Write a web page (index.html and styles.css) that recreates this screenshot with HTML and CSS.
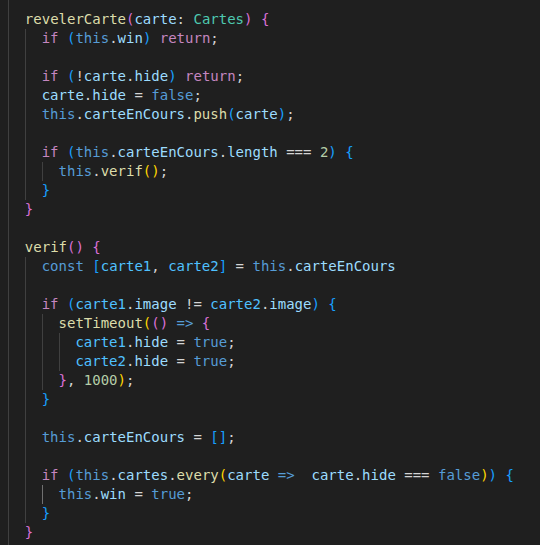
FILE: index.html
```html
<!DOCTYPE html>
<html>
<head>
<meta charset="utf-8">
<link rel="stylesheet" href="styles.css">
</head>
<body>
<div class="editor">
<div class="ln"><i class="g"></i><span class="fn">revelerCarte</span><span class="b2">(</span><span class="v">carte</span>: <span class="ty">Cartes</span><span class="b2">)</span> <span class="b2">{</span></div>
<div class="ln"><i class="g"></i><i class="g"></i><span class="kw">if</span> <span class="b3">(</span><span class="st">this</span>.<span class="v">win</span><span class="b3">)</span> <span class="kw">return</span>;</div>
<div class="ln"><i class="g"></i><i class="g"></i></div>
<div class="ln"><i class="g"></i><i class="g"></i><span class="kw">if</span> <span class="b3">(</span>!<span class="v">carte</span>.<span class="v">hide</span><span class="b3">)</span> <span class="kw">return</span>;</div>
<div class="ln"><i class="g"></i><i class="g"></i><span class="v">carte</span>.<span class="v">hide</span> = <span class="st">false</span>;</div>
<div class="ln"><i class="g"></i><i class="g"></i><span class="st">this</span>.<span class="v">carteEnCours</span>.<span class="fn">push</span><span class="b3">(</span><span class="v">carte</span><span class="b3">)</span>;</div>
<div class="ln"><i class="g"></i><i class="g"></i></div>
<div class="ln"><i class="g"></i><i class="g"></i><span class="kw">if</span> <span class="b3">(</span><span class="st">this</span>.<span class="v">carteEnCours</span>.<span class="v">length</span> === <span class="n">2</span><span class="b3">)</span> <span class="b3">{</span></div>
<div class="ln"><i class="g"></i><i class="g"></i><i class="g"></i><span class="st">this</span>.<span class="fn">verif</span><span class="b1">()</span>;</div>
<div class="ln"><i class="g"></i><i class="g"></i><span class="b3">}</span></div>
<div class="ln"><i class="g"></i><span class="b2">}</span></div>
<div class="ln"><i class="g"></i></div>
<div class="ln"><i class="g"></i><span class="fn">verif</span><span class="b2">()</span> <span class="b2">{</span></div>
<div class="ln"><i class="g"></i><i class="g"></i><span class="st">const</span> <span class="b3">[</span><span class="c">carte1</span>, <span class="c">carte2</span><span class="b3">]</span> = <span class="st">this</span>.<span class="v">carteEnCours</span></div>
<div class="ln"><i class="g"></i><i class="g"></i></div>
<div class="ln"><i class="g"></i><i class="g"></i><span class="kw">if</span> <span class="b3">(</span><span class="c">carte1</span>.<span class="v">image</span> != <span class="c">carte2</span>.<span class="v">image</span><span class="b3">)</span> <span class="b3">{</span></div>
<div class="ln"><i class="g"></i><i class="g"></i><i class="g"></i><span class="fn">setTimeout</span><span class="b1">(</span><span class="b2">()</span> <span class="st">=&gt;</span> <span class="b2">{</span></div>
<div class="ln"><i class="g"></i><i class="g"></i><i class="g"></i><i class="g"></i><span class="c">carte1</span>.<span class="v">hide</span> = <span class="st">true</span>;</div>
<div class="ln"><i class="g"></i><i class="g"></i><i class="g"></i><i class="g"></i><span class="c">carte2</span>.<span class="v">hide</span> = <span class="st">true</span>;</div>
<div class="ln"><i class="g"></i><i class="g"></i><i class="g"></i><span class="b2">}</span>, <span class="n">1000</span><span class="b1">)</span>;</div>
<div class="ln"><i class="g"></i><i class="g"></i><span class="b3">}</span></div>
<div class="ln"><i class="g"></i><i class="g"></i></div>
<div class="ln"><i class="g"></i><i class="g"></i><span class="st">this</span>.<span class="v">carteEnCours</span> = <span class="b3">[]</span>;</div>
<div class="ln"><i class="g"></i><i class="g"></i></div>
<div class="ln"><i class="g"></i><i class="g"></i><span class="kw">if</span> <span class="b3">(</span><span class="st">this</span>.<span class="v">cartes</span>.<span class="fn">every</span><span class="b1">(</span><span class="v">carte</span> <span class="st">=&gt;</span>  <span class="v">carte</span>.<span class="v">hide</span> === <span class="st">false</span><span class="b1">)</span><span class="b3">)</span> <span class="b3">{</span></div>
<div class="ln"><i class="g"></i><i class="g"></i><i class="g active"></i><span class="st">this</span>.<span class="v">win</span> = <span class="st">true</span>;</div>
<div class="ln"><i class="g"></i><i class="g"></i><span class="b3">}</span></div>
<div class="ln"><i class="g"></i><span class="b2">}</span></div>
<div class="ln"><i class="g"></i></div>
</div>
</body>
</html>
```

FILE: styles.css
```css
html, body {
  margin: 0;
  padding: 0;
  background: #1f1f1f;
  height: 100%;
  overflow: hidden;
}

.editor {
  padding: 10px 0 0 8px;
  font-family: "DejaVu Sans Mono", monospace;
  font-size: 14px;
  color: #d4d4d4;
  position: relative;
}

.editor::before {
  content: "";
  position: absolute;
  left: 8px;
  top: 0;
  height: 545px;
  border-left: 1px solid #404040;
}

.ln {
  height: 19px;
  line-height: 19px;
  white-space: pre;
}

.g {
  display: inline-block;
  width: 2ch;
  height: 19px;
  vertical-align: top;
  box-sizing: border-box;
  border-left: 1px solid #404040;
}

.g.active {
  border-left-color: #707070;
}

.kw { color: #c586c0; }
.st { color: #569cd6; }
.v { color: #9cdcfe; }
.c { color: #4fc1ff; }
.fn { color: #dcdcaa; }
.ty { color: #4ec9b0; }
.n { color: #b5cea8; }
.b1 { color: #ffd700; }
.b2 { color: #da70d6; }
.b3 { color: #179fff; }
```
